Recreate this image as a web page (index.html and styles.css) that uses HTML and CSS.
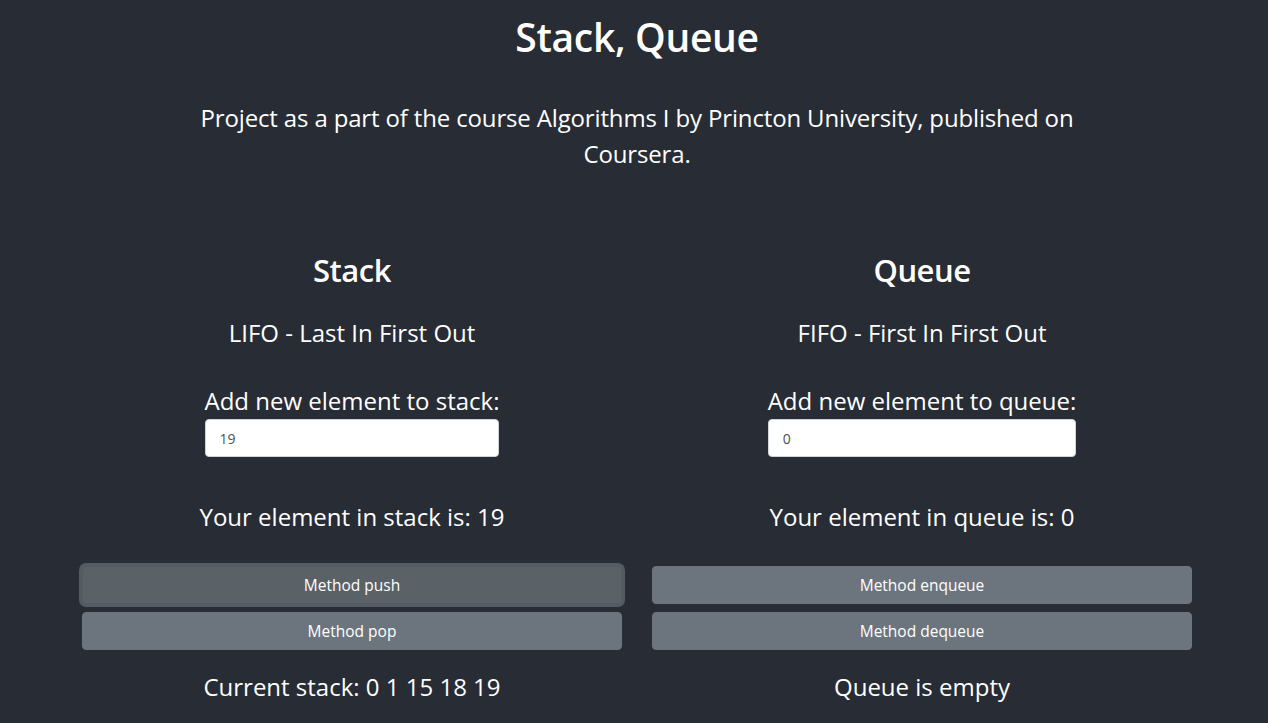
FILE: index.html
```html
<!DOCTYPE html>
<html lang="en">
<head>
<meta charset="utf-8">
<title>Stack, Queue</title>
<link rel="stylesheet" href="styles.css">
</head>
<body>
<div class="page">
  <header class="intro">
    <h1 class="title">Stack, Queue</h1>
    <p class="lead">Project as a part of the course Algorithms I by Princton University, published on Coursera.</p>
  </header>
  <main class="columns">
    <section class="col">
      <h2 class="col-title">Stack</h2>
      <p class="text subtitle">LIFO - Last In First Out</p>
      <div class="field">
        <label class="text field-label" for="stack-input">Add new element to stack:</label>
        <input class="field-input" id="stack-input" type="text" value="19">
      </div>
      <p class="text result">Your element in stack is: 19</p>
      <div class="buttons">
        <button class="btn btn-focus" type="button">Method push</button>
        <button class="btn" type="button">Method pop</button>
      </div>
      <p class="text current">Current stack: 0 1 15 18 19</p>
    </section>
    <section class="col">
      <h2 class="col-title">Queue</h2>
      <p class="text subtitle">FIFO - First In First Out</p>
      <div class="field">
        <label class="text field-label" for="queue-input">Add new element to queue:</label>
        <input class="field-input" id="queue-input" type="text" value="0">
      </div>
      <p class="text result">Your element in queue is: 0</p>
      <div class="buttons">
        <button class="btn" type="button">Method enqueue</button>
        <button class="btn" type="button">Method dequeue</button>
      </div>
      <p class="text current">Queue is empty</p>
    </section>
  </main>
</div>
</body>
</html>
```

FILE: styles.css
```css
* { box-sizing: border-box; }
html, body {
  margin: 0;
  padding: 0;
  background: #282c34;
  height: 100%;
}
body {
  color: #ffffff;
  font-family: "Open Sans", "Noto Sans", Arial, sans-serif;
  overflow: hidden;
}
.page {
  width: 1110px;
  margin-left: 82px;
  text-align: center;
}
.intro {
  padding-top: 13px;
}
.title {
  margin: 0;
  font-size: 39px;
  line-height: 48px;
  font-weight: 600;
  letter-spacing: -0.3px;
}
.lead {
  margin: 39px auto 0;
  width: 900px;
  font-size: 24px;
  line-height: 36px;
  letter-spacing: -0.15px;
}
.columns {
  display: flex;
  gap: 30px;
  margin-top: 79px;
}
.col {
  width: 540px;
  display: flex;
  flex-direction: column;
  align-items: center;
}
.col-title {
  margin: 0;
  font-size: 31px;
  line-height: 38px;
  font-weight: 600;
  letter-spacing: -0.5px;
}
.text {
  margin: 0;
  font-size: 24px;
  line-height: 36px;
}
.subtitle { margin-top: 26px; }
.field {
  margin-top: 32px;
  display: inline-flex;
  flex-direction: column;
}
.field-label { display: block; }
.field-input {
  display: block;
  width: 100%;
  height: 38px;
  padding: 0 14px;
  border: 1px solid #ced4da;
  border-radius: 4px;
  background: #fff;
  color: #495057;
  font-family: inherit;
  font-size: 14px;
  outline: none;
}
.result { margin-top: 42px; }
.buttons {
  margin-top: 31px;
  width: 100%;
  display: flex;
  flex-direction: column;
  gap: 8px;
}
.btn {
  display: block;
  width: 100%;
  height: 38px;
  border: 1px solid #6c757d;
  border-radius: 4px;
  background: #6c757d;
  color: #fff;
  font-family: inherit;
  font-size: 15.5px;
  line-height: 24px;
  padding: 6px 12px;
  cursor: pointer;
}
.btn-focus {
  background: #5a6268;
  border-color: #545b62;
  box-shadow: 0 0 0 3px rgba(130, 138, 145, 0.5);
}
.current { margin-top: 19px; }
```
